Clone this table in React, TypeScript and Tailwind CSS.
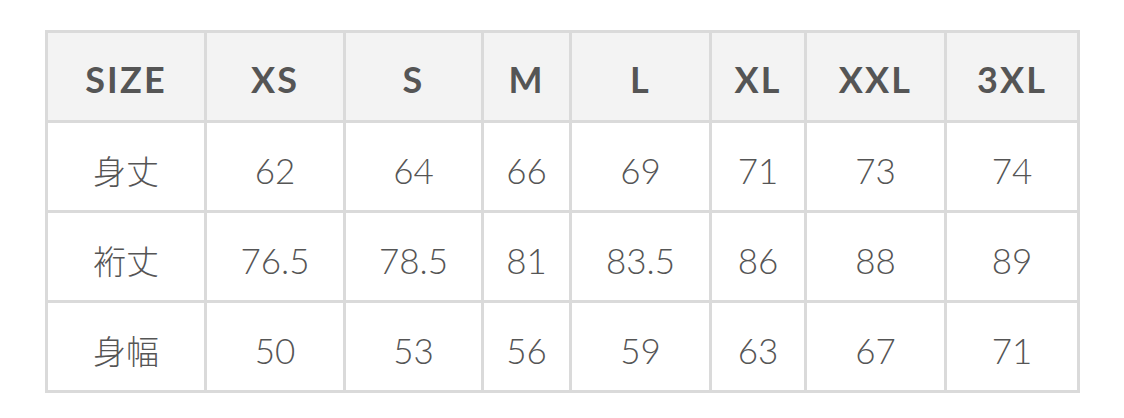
const sizes = ['XS', 'S', 'M', 'L', 'XL', 'XXL', '3XL'];

const rows: { label: string; values: string[] }[] = [
  { label: '身丈', values: ['62', '64', '66', '69', '71', '73', '74'] },
  { label: '裄丈', values: ['76.5', '78.5', '81', '83.5', '86', '88', '89'] },
  { label: '身幅', values: ['50', '53', '56', '59', '63', '67', '71'] },
];

const colWidths = ['w-[159px]', 'w-[139px]', 'w-[138px]', 'w-[88px]', 'w-[140px]', 'w-[95px]', 'w-[140px]', 'w-[133px]'];

const App = () => {
  return (
    <div className="w-[1124px] h-[418px] bg-white pt-[30px] pl-[45px] font-['Lato','Noto_Sans_CJK_JP',sans-serif] text-[#555]">
      <table className="table-fixed border-collapse border-[3px] border-[#dadada] w-[1035px]">
        <colgroup>
          {colWidths.map((w, i) => (
            <col key={i} className={w} />
          ))}
        </colgroup>
        <thead>
          <tr className="bg-[#f3f3f3] h-[90px]">
            <th className="border-[3px] border-[#dadada] pt-[5px] text-[36px] font-bold tracking-[0.06em] text-center">SIZE</th>
            {sizes.map((s) => (
              <th key={s} className="border-[3px] border-[#dadada] pt-[5px] text-[36px] font-bold tracking-[0.06em] text-center">
                {s}
              </th>
            ))}
          </tr>
        </thead>
        <tbody>
          {rows.map((r) => (
            <tr key={r.label} className="h-[90px]">
              <td className="border-[3px] border-[#dadada] pt-[8px] text-[33px] font-light text-center font-['Noto_Sans_CJK_JP',sans-serif]">
                {r.label}
              </td>
              {r.values.map((v, i) => (
                <td key={i} className="border-[3px] border-[#dadada] pt-[8px] text-[35px] font-light text-center">
                  {v}
                </td>
              ))}
            </tr>
          ))}
        </tbody>
      </table>
    </div>
  );
};

export default App;
